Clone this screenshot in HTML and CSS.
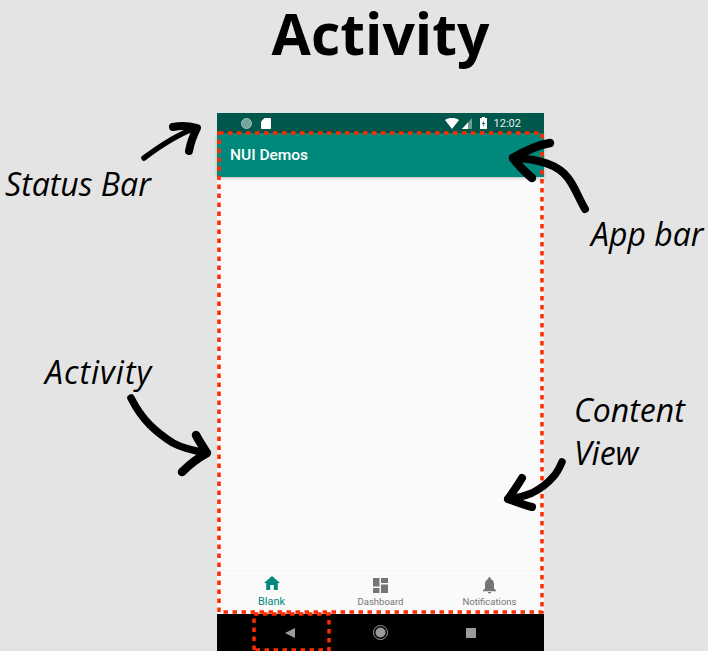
FILE: index.html
```html
<!DOCTYPE html>
<html lang="en">
<head>
  <meta charset="UTF-8">
  <meta name="viewport" content="width=device-width, initial-scale=1.0">
  <title>Activity</title>
  <link rel="stylesheet" href="styles.css">
</head>
<body>
  <h1 class="title">Activity</h1>

  <div class="phone">
    <div class="status-bar">
      <div class="status-left">
        <span class="status-dot"></span>
        <svg class="sd-icon" width="10" height="11" viewBox="0 0 10 11"><path d="M3.500 0H9a1 1 0 0 1 1 1v9a1 1 0 0 1-1 1H1a1 1 0 0 1-1-1V3.500z" fill="#fff"/></svg>
      </div>
      <div class="status-right">
        <svg width="14" height="11" viewBox="0 0 14 11"><path d="M0 2C4 -.6 10 -.6 14 2L7 11z" fill="#fff"/></svg>
        <svg class="signal" width="10" height="11" viewBox="0 0 10 11"><path d="M10 0v11H0z" fill="#6d9c93"/><path d="M6 4.500V11H0z" fill="#fff"/></svg>
        <svg class="battery" width="7" height="12" viewBox="0 0 7 12"><path d="M2 0h3v1h2v11H0V1h2z" fill="#fff"/><path d="M4 3 2 7h1.500L3 10l2-4H3.500z" fill="#00574b"/></svg>
        <span class="clock">12:02</span>
      </div>
    </div>

    <div class="app-bar">NUI Demos</div>

    <div class="content"></div>

    <div class="bottom-nav">
      <div class="tab tab-active">
        <svg width="16" height="18" viewBox="0 0 16 18"><path d="M8 0 16 7h-2.200v7H9.800V9H6.200v5H2.200V7H0z" fill="#00897b"/></svg>
        <span class="tab-label">Blank</span>
      </div>
      <div class="tab">
        <svg width="15" height="18" viewBox="0 -2 15 18"><path d="M0 0h6.500v8.500H0zM0 10h6.500v5H0zM8 0h7v5H8zM8 6.500h7V15H8z" fill="#757575"/></svg>
        <span class="tab-label">Dashboard</span>
      </div>
      <div class="tab">
        <svg width="13" height="18" viewBox="0 -1 13 18"><path d="M6.500 0a1.200 1.200 0 0 1 1.200 1.200v.8C10 2.600 11 4.800 11 7v4.500l2 1.800v.9H0v-.9l2-1.800V7c0-2.200 1-4.400 3.300-5v-.8A1.200 1.200 0 0 1 6.500 0zM4.900 15h3.200A1.600 1.600 0 0 1 4.900 15z" fill="#757575"/></svg>
        <span class="tab-label">Notifications</span>
      </div>
    </div>

    <div class="system-nav">
      <svg width="10" height="10" viewBox="0 0 10 10"><path d="M10 0v10L0 5z" fill="#9b9b9b"/></svg>
      <svg width="15" height="15" viewBox="0 0 15 15"><circle cx="7.500" cy="7.500" r="7" fill="none" stroke="#9b9b9b" stroke-width="1"/><circle cx="7.500" cy="7.500" r="5" fill="#9b9b9b"/></svg>
      <svg width="10" height="10" viewBox="0 0 10 10"><rect width="10" height="10" fill="#9b9b9b"/></svg>
    </div>
  </div>

  <!-- hand drawn notes on top of the screenshot -->
  <svg class="notes" width="708" height="651" viewBox="0 0 708 651">
    <g fill="none" stroke="#ff2a00" stroke-width="3.500" stroke-dasharray="4.500 4.500">
      <path d="M219 133H542V612H219z"/>
      <path d="M254 650V614H329V650H254"/>
    </g>
    <g fill="none" stroke="#000" stroke-linecap="round" stroke-linejoin="round">
      <path d="M144 158C160 146 178 134 196 128" stroke-width="5.500"/>
      <path d="M173 127C182 125 190 126 197 128C194 134 191 140 189 151" stroke-width="8"/>
      <path d="M585 209C578 197 575 187 568 178C560 167 545 159 513 158" stroke-width="8"/>
      <path d="M550 143C538 145 525 151 513 158C518 165 524 171 532 178" stroke-width="8.500"/>
      <path d="M131 398C136 408 142 417 150 425C157 432 165 438 173 443C184 449 195 451 207 453" stroke-width="7.500"/>
      <path d="M196 435C199 441 203 447 207 453C198 458 190 464 182 472" stroke-width="8.500"/>
      <path d="M562 462C559 469 557 473 553 477C547 484 540 489 532 493C525 496 516 498 508 499" stroke-width="7.500"/>
      <path d="M522 478C518 485 513 492 508 499C516 502 524 505 532 507" stroke-width="8"/>
    </g>
  </svg>

  <span class="note note-status">Status Bar</span>
  <span class="note note-appbar">App bar</span>
  <span class="note note-activity">Activity</span>
  <span class="note note-content">Content<br>View</span>
</body>
</html>
```

FILE: styles.css
```css
html, body {
  margin: 0;
  padding: 0;
}
body {
  position: relative;
  width: 708px;
  height: 651px;
  overflow: hidden;
  background-color: #e4e4e4;
  font-family: Roboto, Arial, sans-serif;
}
.title {
  width: 327px;
  margin: 0 0 47px 217px;
  text-align: center;
  font-family: "Open Sans", sans-serif;
  font-size: 57px;
  font-weight: 700;
  line-height: 66px;
  color: #000;
}
.phone {
  display: flex;
  flex-direction: column;
  width: 327px;
  height: 538px;
  margin-left: 217px;
  background-color: #fafafa;
}
.status-bar {
  display: flex;
  justify-content: space-between;
  align-items: center;
  height: 20px;
  padding: 0 23px 0 24px;
  background-color: #00574b;
  flex-shrink: 0;
}
.status-left, .status-right {
  display: flex;
  align-items: center;
}
.status-dot {
  width: 11px;
  height: 11px;
  border-radius: 50%;
  background-color: #76a39b;
  border: 1px solid #a5c4be;
  box-sizing: border-box;
}
.sd-icon {
  margin-left: 9px;
}
.signal {
  margin-left: 3px;
}
.battery {
  margin-left: 8px;
}
.clock {
  margin-left: 7px;
  color: #e8f0ee;
  font-size: 11px;
}
.app-bar {
  display: flex;
  align-items: center;
  height: 44px;
  padding-left: 13px;
  background-color: #00897b;
  box-shadow: 0 1px 3px rgba(0, 0, 0, 0.25);
  color: #fff;
  font-size: 15.500px;
  font-weight: 500;
  flex-shrink: 0;
}
.content {
  flex: 1;
}
.bottom-nav {
  display: flex;
  height: 44px;
  border-top: 1px solid #f3f3f3;
  box-sizing: border-box;
  flex-shrink: 0;
}
.tab {
  flex: 1;
  display: flex;
  flex-direction: column;
  align-items: center;
  padding-top: 5px;
  color: #757575;
}
.tab-label {
  margin-top: 2px;
  font-size: 9.500px;
  line-height: 12px;
}
.tab-active {
  color: #00897b;
}
.tab-active .tab-label {
  font-size: 11px;
}
.system-nav {
  display: flex;
  align-items: center;
  height: 37px;
  padding: 0 68px;
  justify-content: space-between;
  background-color: #000;
  flex-shrink: 0;
}
.notes {
  position: absolute;
  top: 0;
  left: 0;
}
.note {
  position: absolute;
  font-family: "Open Sans", sans-serif;
  font-size: 32px;
  font-style: italic;
  line-height: 43px;
  color: #000;
  white-space: nowrap;
}
.note-status {
  left: 5px;
  top: 162px;
}
.note-appbar {
  left: 591px;
  top: 212px;
}
.note-activity {
  left: 45px;
  top: 350px;
  letter-spacing: 1px;
}
.note-content {
  left: 574px;
  top: 388px;
}
```
